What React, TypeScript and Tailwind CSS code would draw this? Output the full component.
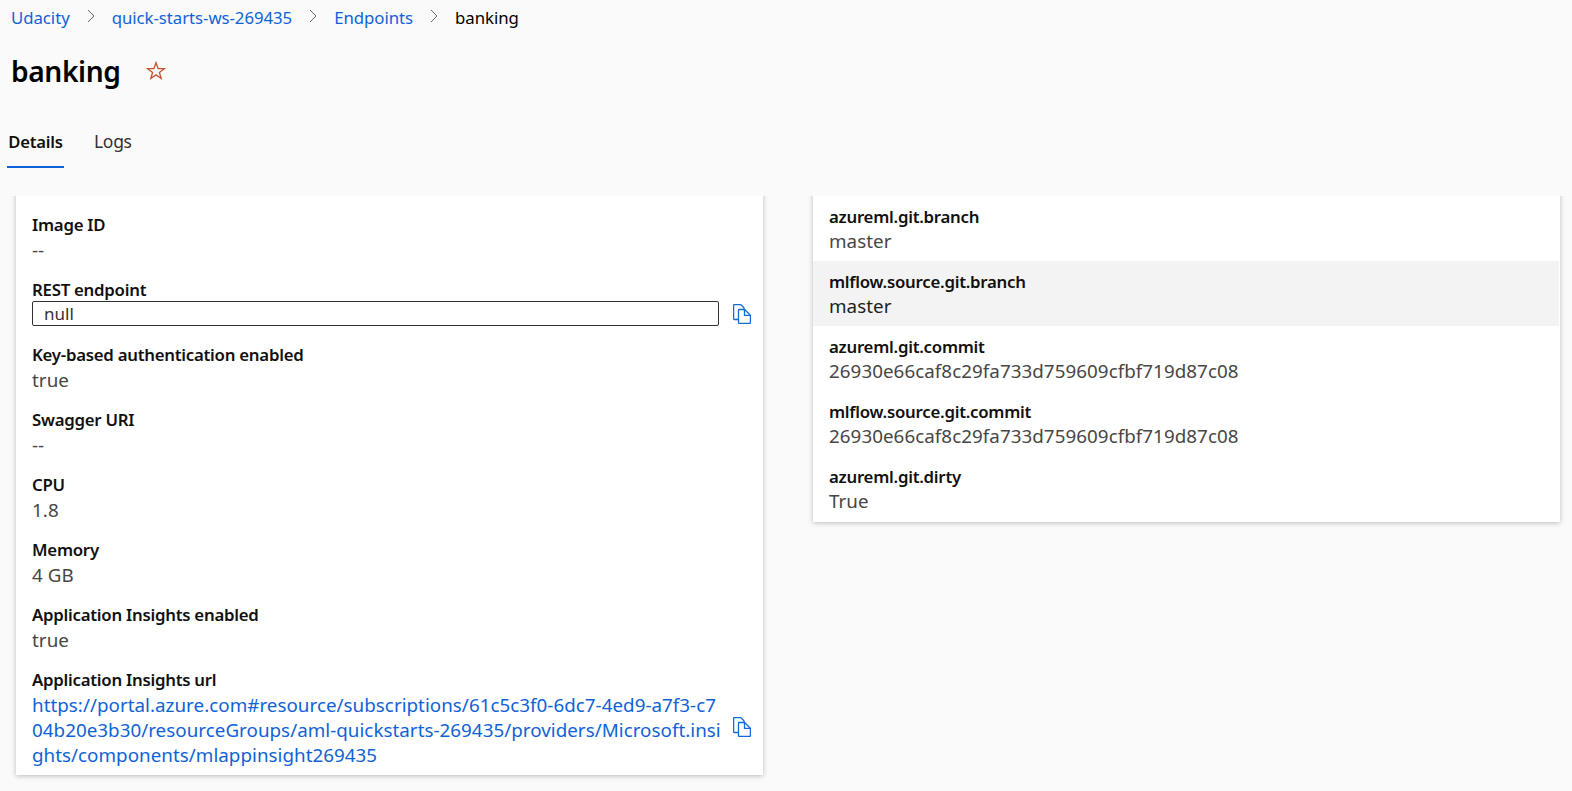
function CopyIcon({ className = '' }: { className?: string }) {
  return (
    <svg width="18" height="20" viewBox="0 0 18 20" fill="none" stroke="#0f6cdd" strokeWidth="1.3" className={`shrink-0 ${className}`}>
      <path d="M5.5 15.5H1.2a.6.6 0 0 1-.6-.6V1.2a.6.6 0 0 1 .6-.6h6.6l3.2 3.2v1.7" />
      <path d="M5.5 6.1a.6.6 0 0 1 .6-.6h5.4l5.9 5.9v7.4a.6.6 0 0 1-.6.6H6.1a.6.6 0 0 1-.6-.6z" />
      <path d="M11.5 5.5v5.9h5.9" />
    </svg>
  );
}

function Chevron() {
  return (
    <svg width="10" height="14" viewBox="0 0 10 14" fill="none" stroke="#6b6662" strokeWidth="1" className="mb-1">
      <path d="M2 1l6 6-6 6" />
    </svg>
  );
}

function Label({ children, low }: { children: string; low?: boolean }) {
  return (
    <div className={`h-[25px] text-[16.8px] font-semibold tracking-[-0.25px] text-[#11100f] ${low ? 'leading-[25px]' : 'leading-[23px]'}`}>
      {children}
    </div>
  );
}

function Field({ label, value, dark, low }: { label: string; value: string; dark?: boolean; low?: boolean }) {
  return (
    <div className="h-[65px] px-[16px] pt-[8px]">
      <Label low={low}>{label}</Label>
      <div className={`h-[25px] leading-[25px] tracking-[0.05px] ${dark ? 'text-[#201f1e]' : 'text-[#484644]'}`}>{value}</div>
    </div>
  );
}

const rightRows = [
  ['azureml.git.branch', 'master'],
  ['mlflow.source.git.branch', 'master'],
  ['azureml.git.commit', '26930e66caf8c29fa733d759609cfbf719d87c08'],
  ['mlflow.source.git.commit', '26930e66caf8c29fa733d759609cfbf719d87c08'],
  ['azureml.git.dirty', 'True'],
];

const linkLines = [
  'https://portal.azure.com#resource/subscriptions/61c5c3f0-6dc7-4ed9-a7f3-c7',
  '04b20e3b30/resourceGroups/aml-quickstarts-269435/providers/Microsoft.insi',
  'ghts/components/mlappinsight269435',
];

export default function App() {
  return (
    <div className="h-[791px] w-[1572px] overflow-hidden bg-[#fafafa] text-[18.8px] font-['Noto_Sans','Open_Sans',sans-serif]">
      {/* Breadcrumb */}
      <div className="flex h-[36px] items-center pl-[11px] text-[16.8px] tracking-[-0.05px] text-[#0f62d6]">
        <span>Udacity</span>
        <span className="mx-[16px]"><Chevron /></span>
        <span>quick-starts-ws-269435</span>
        <span className="mx-[16px]"><Chevron /></span>
        <span>Endpoints</span>
        <span className="mx-[16px]"><Chevron /></span>
        <span className="text-black">banking</span>
      </div>

      {/* Title */}
      <div className="mt-[15px] flex h-[40px] items-center pl-[11px]">
        <h1 className="text-[28.2px] font-semibold leading-[40px] tracking-[-0.4px] text-black">banking</h1>
        <svg width="20" height="20" viewBox="0 0 20 20" fill="none" stroke="#c8502f" strokeWidth="1.3" className="mb-[1px] ml-[25px]">
          <path d="M10 1.6l2.1 5.9 6.3.2-5 3.8 1.8 6-5.2-3.6-5.2 3.6 1.8-6-5-3.8 6.3-.2z" />
        </svg>
      </div>

      {/* Tabs */}
      <div className="mt-[35px] flex h-[42px] pl-[7px]">
        <div className="h-[42px] w-[57px] border-b-2 border-[#0f62d6] pt-[4px] text-center text-[16.6px] font-semibold leading-[24px] tracking-[-0.2px] text-[#11100f]">Details</div>
        <div className="ml-[30px] pt-[3px] text-[17.5px] leading-[24px] tracking-[-0.3px] text-[#323130]">Logs</div>
      </div>

      {/* Cards, scrolled so their top edge sits under the tab bar */}
      <div className="mt-[28px] flex h-[595px] items-start overflow-hidden">
        <div className="-mt-[10px] ml-[16px] w-[747px] bg-white pt-[19px] shadow-[0_1px_5px_rgba(0,0,0,0.25)]">
          <Field label="Image ID" value="--" />
          <div className="h-[65px] pl-[16px] pt-[8px]">
            <Label>REST endpoint</Label>
            <div className="-mt-[2px] flex items-center gap-[14px]">
              <div className="h-[25px] w-[687px] shrink-0 rounded-[2px] border border-[#323130] pl-[11px] text-[17px] leading-[23px] text-[#323130]">null</div>
              <CopyIcon />
            </div>
          </div>
          <Field label="Key-based authentication enabled" value="true" />
          <Field label="Swagger URI" value="--" />
          <Field label="CPU" value="1.8" />
          <Field label="Memory" value="4 GB" />
          <Field label="Application Insights enabled" value="true" />
          <div className="pb-[7px] pl-[16px] pt-[8px]">
            <Label>Application Insights url</Label>
            <div className="flex items-start gap-[14px]">
              <div className="w-[687px] shrink-0 whitespace-nowrap leading-[25px] tracking-[0.03px] text-[#0f62d6]">
                {linkLines.map((line) => (
                  <div key={line}>{line}</div>
                ))}
              </div>
              <CopyIcon className="mt-[24px]" />
            </div>
          </div>
        </div>

        <div className="-mt-[10px] ml-[50px] w-[747px] bg-white pb-[1px] pt-[10px] shadow-[0_1px_5px_rgba(0,0,0,0.25)]">
          {rightRows.map(([label, value], i) => (
            <div key={label} className={i === 1 ? 'mr-[1px] bg-[#f3f3f3]' : ''}>
              <Field label={label} value={value} dark={i === 1} low />
            </div>
          ))}
        </div>
      </div>
    </div>
  );
}
